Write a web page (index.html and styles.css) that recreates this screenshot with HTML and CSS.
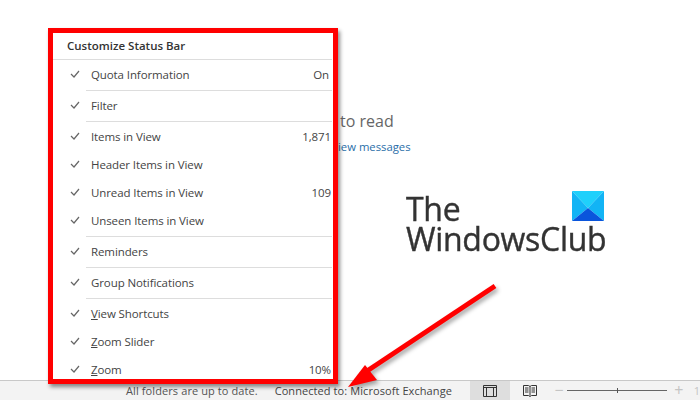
FILE: index.html
```html
<!DOCTYPE html>
<html lang="en">
<head>
<meta charset="utf-8">
<title>Customize Status Bar</title>
<link rel="stylesheet" href="styles.css">
</head>
<body>
<main class="main">
  <section class="pane">
    <p class="pane-title">to read</p>
    <p class="pane-link">iew messages</p>
  </section>
  <div class="logo">
    <div class="logo-text">The<br>WindowsClub</div>
    <svg class="logo-mark" viewBox="0 0 32 30" width="32" height="30">
      <polygon points="0,0 32,0 16,17" fill="#1fd0fb"/>
      <polygon points="0,0 16,17 0,30" fill="#12b4f5"/>
      <polygon points="32,0 16,17 32,30" fill="#12b4f5"/>
      <polygon points="0,30 16,17 32,30" fill="#0a55dc"/>
    </svg>
  </div>
</main>
<footer class="status">
  <span class="status-a">All folders are up to date.</span>
  <span class="status-b">Connected to: Microsoft Exchange</span>
  <span class="view-btn active">
    <svg viewBox="0 0 14 12" width="14" height="12"><path d="M.5.5h13v11H.5zM.5 2.500h13M3.500 2.500v9M10.500 2.500v9" fill="none" stroke="#333"/></svg>
  </span>
  <span class="view-btn">
    <svg viewBox="0 0 14 13" width="14" height="13"><path d="M.5 1.500h5l1.500 1 1.500-1h5v10h-5l-1.500 1-1.500-1h-5zM7 2.500v9M2 4h3.500M2 6h3.500M2 8h3.500M8.500 4H12M8.500 6H12M8.500 8H12" fill="none" stroke="#333"/></svg>
  </span>
  <span class="zoom-sign">−</span>
  <span class="slider"><span class="tick"></span></span>
  <span class="zoom-sign">+</span>
  <span class="zoom-pct">1</span>
</footer>

<div class="menu">
  <div class="menu-title">Customize Status Bar</div>
  <div class="group first">
    <div class="row"><svg class="check" viewBox="0 0 10 8"><path d="M1 4l3 3 5-6" fill="none" stroke="#666" stroke-width="1.200"/></svg><span class="label">Quota Information</span><span class="val val-on">On</span></div>
  </div>
  <div class="group">
    <div class="row"><svg class="check" viewBox="0 0 10 8"><path d="M1 4l3 3 5-6" fill="none" stroke="#666" stroke-width="1.200"/></svg><span class="label">Filter</span></div>
  </div>
  <div class="group">
    <div class="row"><svg class="check" viewBox="0 0 10 8"><path d="M1 4l3 3 5-6" fill="none" stroke="#666" stroke-width="1.200"/></svg><span class="label">Items in View</span><span class="val">1,871</span></div>
    <div class="row"><svg class="check" viewBox="0 0 10 8"><path d="M1 4l3 3 5-6" fill="none" stroke="#666" stroke-width="1.200"/></svg><span class="label">Header Items in View</span></div>
    <div class="row"><svg class="check" viewBox="0 0 10 8"><path d="M1 4l3 3 5-6" fill="none" stroke="#666" stroke-width="1.200"/></svg><span class="label">Unread Items in View</span><span class="val">109</span></div>
    <div class="row"><svg class="check" viewBox="0 0 10 8"><path d="M1 4l3 3 5-6" fill="none" stroke="#666" stroke-width="1.200"/></svg><span class="label">Unseen Items in View</span></div>
  </div>
  <div class="group">
    <div class="row"><svg class="check" viewBox="0 0 10 8"><path d="M1 4l3 3 5-6" fill="none" stroke="#666" stroke-width="1.200"/></svg><span class="label">Reminders</span></div>
  </div>
  <div class="group">
    <div class="row"><svg class="check" viewBox="0 0 10 8"><path d="M1 4l3 3 5-6" fill="none" stroke="#666" stroke-width="1.200"/></svg><span class="label">Group Notifications</span></div>
  </div>
  <div class="group">
    <div class="row"><svg class="check" viewBox="0 0 10 8"><path d="M1 4l3 3 5-6" fill="none" stroke="#666" stroke-width="1.200"/></svg><span class="label"><u>V</u>iew Shortcuts</span></div>
    <div class="row"><svg class="check" viewBox="0 0 10 8"><path d="M1 4l3 3 5-6" fill="none" stroke="#666" stroke-width="1.200"/></svg><span class="label"><u>Z</u>oom Slider</span></div>
    <div class="row"><svg class="check" viewBox="0 0 10 8"><path d="M1 4l3 3 5-6" fill="none" stroke="#666" stroke-width="1.200"/></svg><span class="label"><u>Z</u>oom</span><span class="val">10%</span></div>
  </div>
</div>

<svg class="arrow" viewBox="0 0 700 400" width="700" height="400">
  <path d="M495 286L364 373" stroke="#f00" stroke-width="5" fill="none"/>
  <polygon points="348,387 365,365 377,380" fill="#f00"/>
</svg>
</body>
</html>
```

FILE: styles.css
```css
* { box-sizing: border-box; }
html, body { margin: 0; height: 400px; overflow: hidden; }
body {
  position: relative;
  width: 700px;
  display: flex;
  flex-direction: column;
  background: #fff;
  font-family: "Open Sans", "Noto Sans", sans-serif;
  color: #444;
}
p { margin: 0; }

.main { flex: 1; display: flex; min-height: 0; }
.pane { display: flex; flex-direction: column; padding: 109px 0 0 340px; }
.pane-title { font-size: 16px; line-height: 24px; color: #666; white-space: nowrap; }
.pane-link { font-size: 11.300px; line-height: 16px; margin: 6px 0 0 -2px; color: #2a6ea8; white-space: nowrap; }

.logo { position: absolute; left: 406px; top: 191px; width: 200px; height: 70px; }
.logo-text {
  font-size: 32px;
  line-height: 30px;
  color: #333;
  letter-spacing: -.3px;
  padding-top: 3px;
  -webkit-text-stroke: .4px #333;
  filter: blur(.4px);
  white-space: nowrap;
}
.logo-mark { position: absolute; left: 166px; top: 0; filter: blur(.4px); }

.status {
  height: 20px;
  flex: none;
  background: #f3f3f3;
  border-top: 1px solid #c8c8c8;
  display: flex;
  align-items: center;
  font-size: 11px;
  color: #555;
  white-space: nowrap;
}
.status-a { margin-left: 126px; width: 149px; letter-spacing: .1px; }
.status-b { width: 196px; color: #444; letter-spacing: .08px; }
.view-btn { width: 40px; height: 19px; display: flex; align-items: center; justify-content: center; }
.view-btn.active { background: #dedede; }
.zoom-sign { color: #c4c4c4; font-size: 16px; width: 12px; margin-left: 3px; text-align: center; line-height: 19px; }
.slider { position: relative; width: 100px; height: 1px; background: #666; margin: 0 3px 0 2px; }
.tick { position: absolute; left: 50px; top: -2px; width: 1px; height: 5px; background: #555; }
.zoom-pct { color: #c4c4c4; margin-left: 9px; }

.menu {
  position: absolute;
  left: 48px;
  top: 28px;
  width: 290px;
  height: 356px;
  background: #fff;
  border: 5px solid #f00;
  box-shadow: 2px 3px 4px rgba(0,0,0,.45);
  font-size: 11.500px;
  letter-spacing: -.1px;
  color: #444;
}
.menu-title {
  height: 27px;
  margin-right: 1px;
  padding: 5px 0 0 14px;
  font-weight: 600;
  letter-spacing: 0;
  line-height: 16px;
  color: #333;
  border-bottom: 1px solid #ddd;
}
.group { position: relative; padding: 1.500px 0; }
.group::before { content: ""; position: absolute; left: 33px; right: 1px; top: 0; height: 1px; background: #ddd; }
.group.first { margin-top: -1px; }
.group.first::before { display: none; }
.row { position: relative; height: 28px; display: flex; align-items: center; padding-left: 38px; padding-right: 2px; white-space: nowrap; }
.check { position: absolute; left: 17px; top: 50%; margin-top: -5px; width: 10px; height: 8px; }
.label { flex: 1; }
.val-on { margin-right: 2px; }
.arrow { position: absolute; left: 0; top: 0; filter: drop-shadow(2px 3px 2px rgba(0,0,0,.35)); pointer-events: none; }
```
